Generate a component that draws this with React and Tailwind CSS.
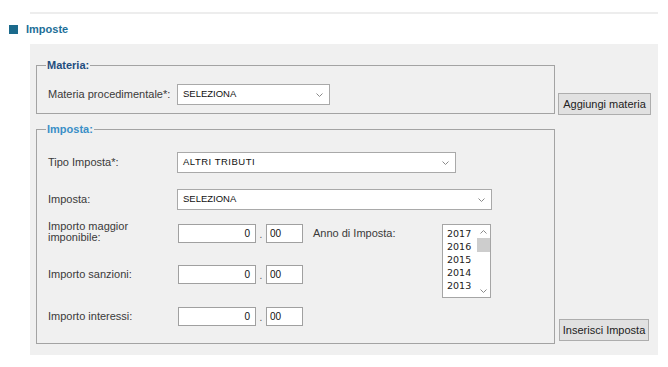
import React from "react";

function Chevron({ up = false, className = "" }) {
  return (
    <svg width="7" height="4" viewBox="0 0 7 4" className={className}>
      <path
        d={up ? "M0.5 3.5 L3.5 0.5 L6.5 3.5" : "M0.5 0.5 L3.5 3.5 L6.5 0.5"}
        fill="none"
        stroke="#8a8a8a"
        strokeWidth="1"
      />
    </svg>
  );
}

function Select({ value, width, spaced = false }) {
  return (
    <div
      className={`flex h-[21px] items-center justify-between border border-[#a9a9a9] bg-white pl-[5px] pr-[6px] ${width}`}
    >
      <span
        className={`text-[9.5px] text-[#111] ${spaced ? "tracking-[0.5px]" : ""}`}
      >
        {value}
      </span>
      <Chevron />
    </div>
  );
}

function Amount() {
  return (
    <div className="flex h-[19px] items-stretch">
      <div className="flex w-[78px] items-center justify-end border border-[#a0a0a0] bg-white pr-[5px] text-[10px] text-[#111]">
        0
      </div>
      <div className="flex w-[10px] items-end justify-center pb-[1px] text-[10px] text-[#555]">
        .
      </div>
      <div className="flex w-[37px] items-center border border-[#a0a0a0] bg-white pl-[3px] text-[10px] text-[#111]">
        00
      </div>
    </div>
  );
}

function Legend({ children, color }) {
  return (
    <legend
      className={`ml-[9px] px-[1px] text-[11px] font-bold leading-[14px] ${color}`}
    >
      {children}
    </legend>
  );
}

export default function App() {
  const years = ["2017", "2016", "2015", "2014", "2013"];

  return (
    <div className="h-[367px] w-[668px] bg-white font-['Liberation_Sans',Arial,sans-serif] text-[11px] text-[#3a3a3a]">
      <div className="pt-[12px]">
        <div className="ml-[30px] mr-[10px] h-[2px] bg-[#ededed]" />
      </div>

      <div className="mt-[8px] flex h-[14px] items-center pl-[9px]">
        <span className="h-[9px] w-[9px] bg-[#1b6a8c]" />
        <span className="ml-[8px] text-[11px] font-bold text-[#1d6f98]">
          Imposte
        </span>
      </div>

      <div className="ml-[30px] mt-[8px] h-[311px] w-[628px] bg-[#f0f0f0] pl-[6px] pt-[14px]">
        <div className="flex items-start">
          <fieldset className="w-[519px] border border-[#a3a3a3]">
            <Legend color="text-[#1f4d7e]">Materia:</Legend>
            <div className="flex items-center pb-[8px] pl-[11px] pt-[12px]">
              <span className="w-[129px]">Materia procedimentale*:</span>
              <Select value="SELEZIONA" width="w-[153px]" />
            </div>
          </fieldset>
          <button className="ml-[3px] mt-[35px] h-[22px] w-[93px] border border-[#adadad] bg-[#e1e1e1] text-[11px] text-[#222]">
            Aggiungi materia
          </button>
        </div>

        <div className="mt-[7px] flex items-end">
          <fieldset className="w-[519px] border border-[#a3a3a3]">
            <Legend color="text-[#3a8fc7]">Imposta:</Legend>
            <div className="pb-[17px] pl-[11px] pt-[16px]">
              <div className="flex items-center">
                <span className="w-[129px]">Tipo Imposta*:</span>
                <Select value="ALTRI TRIBUTI" width="w-[279px]" spaced />
              </div>
              <div className="mt-[16px] flex items-center">
                <span className="w-[129px]">Imposta:</span>
                <Select value="SELEZIONA" width="w-[315px]" />
              </div>

              <div className="mt-[14px] flex items-start">
                <div>
                  <div className="flex items-start">
                    <span className="-mt-[3px] w-[130px] leading-[11px]">
                      Importo maggior
                      <br />
                      imponibile:
                    </span>
                    <Amount />
                  </div>
                  <div className="mt-[22px] flex items-center">
                    <span className="w-[130px]">Importo sanzioni:</span>
                    <Amount />
                  </div>
                  <div className="mt-[23px] flex items-center">
                    <span className="w-[130px]">Importo interessi:</span>
                    <Amount />
                  </div>
                </div>

                <div className="ml-[10px] flex items-start">
                  <span className="w-[129px] leading-[19px]">
                    Anno di Imposta:
                  </span>
                  <div className="flex h-[74px] w-[49px] border border-[#a5a5a5] bg-white">
                    <div className="flex-1 pl-[4px] pt-[2px] font-['DejaVu_Sans',sans-serif] text-[9.5px] leading-[13px] text-[#222]">
                      {years.map((y) => (
                        <div key={y}>{y}</div>
                      ))}
                    </div>
                    <div className="flex w-[13px] flex-col items-center">
                      <div className="flex h-[13px] items-center justify-center">
                        <Chevron up />
                      </div>
                      <div className="h-[14px] w-full bg-[#cdcdcd]" />
                      <div className="flex-1" />
                      <div className="flex h-[13px] items-center justify-center">
                        <Chevron />
                      </div>
                    </div>
                  </div>
                </div>
              </div>
            </div>
          </fieldset>
          <button className="mb-[3px] ml-[4px] h-[22px] w-[90px] border border-[#adadad] bg-[#e1e1e1] text-[11px] text-[#222]">
            Inserisci Imposta
          </button>
        </div>
      </div>
    </div>
  );
}
